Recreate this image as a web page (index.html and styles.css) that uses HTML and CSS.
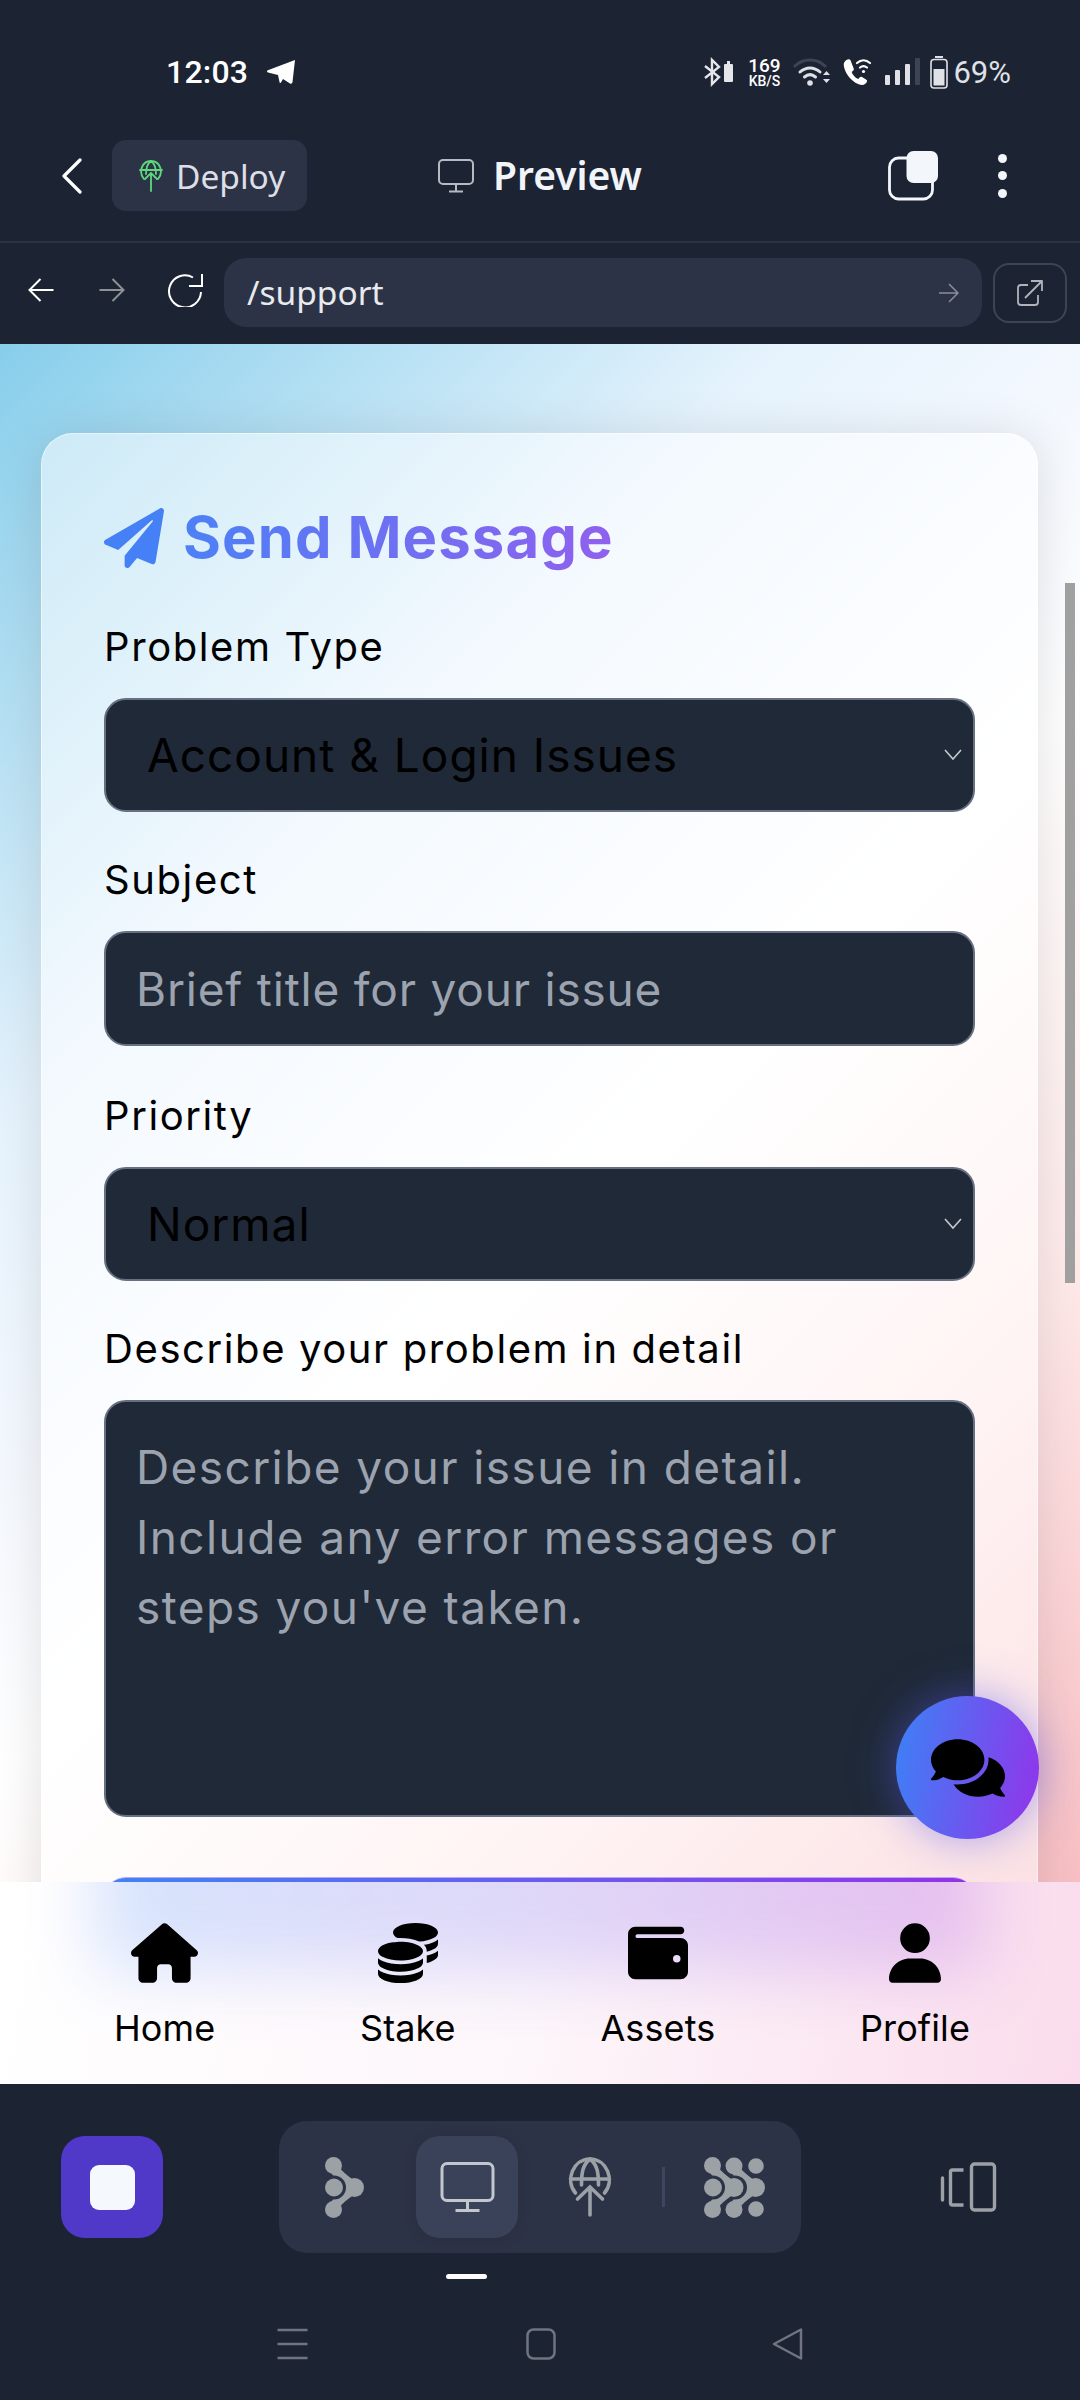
FILE: index.html

```html
<!DOCTYPE html>
<html>
	<head>
		<meta http-equiv="Content-Type" content="text/html; charset=utf-8" />
		<title>Preview - Support</title>
		<link rel="stylesheet" href="styles.css">
	</head>
	<body>
		<div id="phone">
			<!-- status bar -->
			<div class="status">
				<span class="time">12:03</span>
				<svg class="tg" viewBox="0 0 28 24" width="28" height="24"><path fill="#fff" d="M28 0 25.500 22c-.2 1.500-1.300 2-2.500 1.500L16 19l-2 3.500c-.5.800-1.500.5-1.500-.5L11 15 1 12.500C-.3 12-.3 11 .8 10.300Z"/></svg>
				<div class="status-icons">
					<svg viewBox="0 0 30 30" width="30" height="30" fill="none"><path stroke="#e4e6ea" stroke-width="2.400" d="M1 9 15 20 8 27V3l7 7L1 21"/><rect x="20" y="7" width="9" height="18" rx="1" fill="#e4e6ea"/><rect x="23" y="4" width="3" height="3" fill="#e4e6ea"/></svg>
					<div class="speed"><b>169</b><i>KB/S</i></div>
					<svg viewBox="0 0 37 30" width="37" height="30" fill="none" stroke-linecap="round"><path stroke="#3d4454" stroke-width="3" d="M2 9C10 1 24 1 32 9"/><path stroke="#dfe1e6" stroke-width="3" d="M7 15c6-5.500 14-5.500 20 0M11.500 20c3.500-3 7.500-3 11 0"/><circle cx="17" cy="26" r="2.800" fill="#dfe1e6"/><path fill="#dfe1e6" d="M30 18h7l-3.500-4ZM30 22h7l-3.500 4Z"/></svg>
					<svg viewBox="0 0 29 30" width="29" height="30" fill="none"><path fill="#fff" d="M1 6c-1 2 1 9 5 14s10 8 13 8c2.500 0 4.500-2 5-3.500.3-1-.2-1.500-1-2l-4-2.500c-1-.5-1.700-.3-2.400.5l-1.400 1.500c-2.500-.8-5.500-4-6.500-7l1.600-1.500c.6-.6.8-1.300.3-2.200L7.400 3c-.5-.8-1.200-1-2-.8C3.400 2.700 1.700 4 1 6Z"/><path stroke="#fff" stroke-width="2.200" stroke-linecap="round" d="M14 6c4-3.500 9-3.500 13 0M17 10.500c2.200-1.800 4.800-1.800 7 0"/><circle cx="20.500" cy="14.500" r="1.600" fill="#fff"/></svg>
					<svg class="sig" viewBox="0 0 35 28" width="35" height="28"><rect x="0" y="17" width="5" height="10" rx="1" fill="#dfe1e6"/><rect x="10" y="12" width="5" height="15" rx="1" fill="#dfe1e6"/><rect x="20" y="6" width="5" height="21" rx="1" fill="#dfe1e6"/><rect x="30" y="0" width="5" height="27" rx="1" fill="#3d4454"/></svg>
					<svg class="batt" viewBox="0 0 18 33" width="18" height="33" fill="none"><rect x="5" y="0" width="8" height="2" fill="#dfe1e6"/><rect x="1" y="3.500" width="16" height="28.500" rx="3" stroke="#dfe1e6" stroke-width="1.600"/><rect x="3.500" y="13" width="11" height="16.500" fill="#dfe1e6"/></svg>
					<span class="pct">69%</span>
				</div>
			</div>

			<!-- top bar -->
			<div class="appbar">
				<svg class="back" viewBox="0 0 20 36" width="20" height="36" fill="none"><path stroke="#fff" stroke-width="3.200" stroke-linecap="round" stroke-linejoin="round" d="M18 2 2 18l16 16"/></svg>
				<div class="chip">
					<svg viewBox="0 0 24 32" width="24" height="32" fill="none" stroke="#5dd87e" stroke-width="1.800" stroke-linecap="round"><path d="M5 19C-1 12 3 1 12 1s13 11 7 18"/><path d="M1 10h22M12 1C8 4 7 8 7 14M12 1c4 3 5 7 5 13"/><path d="M12 31V13M6 19l6-6 6 6"/></svg>
					<span>Deploy</span>
				</div>
				<svg class="mon" viewBox="0 0 36 34" width="36" height="34" fill="none" stroke="#b6bac2" stroke-width="2"><rect x="1" y="1" width="34" height="24" rx="4"/><path d="M18 25v7M11 32.500h14"/></svg>
				<span class="title">Preview</span>
				<svg class="tabs" viewBox="0 0 50 50" width="50" height="50"><rect x="1.500" y="7" width="43" height="41" rx="9" fill="none" stroke="#f3f6fb" stroke-width="2.800"/><rect x="18.500" y="0" width="31.500" height="32" rx="7" fill="#f3f6fb"/></svg>
				<div class="dots"><i></i><i></i><i></i></div>
			</div>

			<!-- url bar -->
			<div class="urlbar">
				<svg class="nav" viewBox="0 0 26 26" width="27" height="26" fill="none" stroke="#fff" stroke-width="2"><path d="M26 13H2M13 2 2 13l11 11"/></svg>
				<svg class="nav fwd" viewBox="0 0 26 26" width="27" height="26" fill="none" stroke="#8e9196" stroke-width="2"><path d="M0 13h24M13 2l11 11-11 11"/></svg>
				<svg class="nav reload" viewBox="0 0 36 34" width="36" height="34" fill="none" stroke="#fff" stroke-width="2"><path d="M34 19A16 16 0 1 1 26 4.500"/><path d="M22 13h13V1"/></svg>
				<div class="url">
					<span>/support</span>
					<svg viewBox="0 0 20 20" width="20" height="20" fill="none" stroke="#8a8e98" stroke-width="1.500"><path d="M0 10h19M10 1l9 9-9 9"/></svg>
				</div>
				<div class="ext">
					<svg viewBox="0 0 26 26" width="26" height="26" fill="none" stroke="#b0b4ba" stroke-width="1.800" stroke-linejoin="round"><path d="M11 5H4a3 3 0 0 0-3 3v14a3 3 0 0 0 3 3h14a3 3 0 0 0 3-3v-7"/><path d="M8 18 25 1M14 1h11v10"/></svg>
				</div>
			</div>

			<!-- page -->
			<div class="page">
				<div class="card">
					<h2 class="heading">
						<svg viewBox="0 0 512 512" width="60" height="60"><path fill="#4680f6" d="M476 3.200L12.500 270.600c-18.100 10.400-15.800 35.600 2.200 43.200L121 358.400l287.300-253.200c5.500-4.900 13.300 2.600 8.600 8.300L176 407v80.500c0 23.600 28.500 32.900 42.500 15.800L282 426l124.600 52.200c14.200 6 30.400-2.900 33-18.200l72-432C515 7.800 493.300-6.800 476 3.200z"/></svg>
						<span>Send Message</span>
					</h2>
					<label class="label">Problem Type</label>
					<div class="select-wrap">
						<select class="control"><option>Account &amp; Login Issues</option></select>
						<svg viewBox="0 0 18 12" width="18" height="12" fill="none" stroke="#c6cad2" stroke-width="1.600"><path d="M1 1l8 9 8-9"/></svg>
					</div>
					<label class="label">Subject</label>
					<input class="control text" type="text" placeholder="Brief title for your issue">
					<label class="label">Priority</label>
					<div class="select-wrap">
						<select class="control"><option>Normal</option></select>
						<svg viewBox="0 0 18 12" width="18" height="12" fill="none" stroke="#c6cad2" stroke-width="1.600"><path d="M1 1l8 9 8-9"/></svg>
					</div>
					<label class="label">Describe your problem in detail</label>
					<textarea class="control area" placeholder="Describe your issue in detail. Include any error messages or steps you've taken."></textarea>
					<div class="send"></div>
				</div>
				<div class="scroll"></div>
				<div class="fab">
					<svg viewBox="0 0 576 512" width="74" height="66"><path d="M416 192c0-88.400-93.100-160-208-160S0 103.600 0 192c0 34.300 14.100 65.900 38 92-13.400 30.200-35.500 54.200-35.800 54.500-2.200 2.300-2.800 5.700-1.500 8.700S4.800 352 8 352c36.600 0 66.900-12.300 88.700-25 32.200 15.700 70.300 25 111.300 25 114.900 0 208-71.600 208-160zm122 220c23.900-26 38-57.700 38-92 0-66.900-53.500-124.200-129.300-148.100.9 6.600 1.300 13.300 1.300 20.100 0 105.900-107.700 192-240 192-10.800 0-21.300-.8-31.700-1.900C207.800 439.600 281.800 480 368 480c41 0 79.100-9.200 111.300-25 21.800 12.700 52.100 25 88.700 25 3.200 0 6.100-1.900 7.300-4.800 1.300-2.900.7-6.300-1.500-8.700-.3-.3-22.400-24.200-35.800-54.500z"/></svg>
				</div>
			</div>

			<!-- bottom tabs -->
			<div class="tabbar">
				<div class="tab">
					<svg viewBox="0 0 576 512" width="67" height="60"><path d="M575.800 255.500c0 18-15 32.100-32 32.100h-32l.7 160.200c0 2.700-.2 5.400-.5 8.100V472c0 22.100-17.900 40-40 40H456c-1.100 0-2.200 0-3.300-.1c-1.400 .1-2.800 .1-4.200 .1H416 392c-22.100 0-40-17.900-40-40V448 384c0-17.700-14.300-32-32-32H256c-17.700 0-32 14.300-32 32v64 24c0 22.100-17.900 40-40 40H160 128.100c-1.500 0-3-.1-4.500-.2c-1.200 .1-2.400 .2-3.600 .2H104c-22.100 0-40-17.900-40-40V360c0-.9 0-1.900 .1-2.800V287.600H32c-18 0-32-14-32-32.100c0-9 3-17 10-24L266.400 8c7-7 15-8 22-8s15 2 21 7L564.800 231.500c8 7 12 15 11 24z"/></svg>
					<span>Home</span>
				</div>
				<div class="tab">
					<svg viewBox="0 0 512 512" width="60" height="60"><path d="M512 80c0 18-14.300 34.600-38.400 48c-29.100 16.100-72.500 27.500-122.300 30.900c-3.700-1.800-7.400-3.500-11.300-5C300.600 137.400 248.200 128 192 128c-8.300 0-16.400 .2-24.500 .6l-1.100-.6C142.300 114.600 128 98 128 80c0-44.200 86-80 192-80S512 35.800 512 80zM160.700 161.100c10.200-.7 20.700-1.100 31.300-1.100c62.200 0 117.400 12.300 152.500 31.400C369.300 204.900 384 221.700 384 240c0 4-.7 7.900-2.100 11.700c-4.600 13.200-17 25.300-35 35.500c0 0 0 0 0 0c-.1 .1-.3 .1-.4 .2l0 0 0 0c-.3 .2-.6 .3-.9 .5c-35 19.400-90.800 32-153.600 32c-59.600 0-112.900-11.300-148.200-29.100c-1.900-.9-3.700-1.900-5.500-2.900C14.300 274.600 0 258 0 240c0-34.800 53.400-64.500 128-75.400c10.500-1.500 21.400-2.700 32.700-3.500zM416 240c0-21.900-10.600-39.900-24.100-53.400c28.300-4.400 54.200-11.400 76.200-20.500c16.300-6.800 31.500-15.200 43.900-25.500V176c0 19.300-16.500 37.100-43.800 50.900c-14.600 7.400-32.400 13.700-52.400 18.500c.1-1.800 .2-3.500 .2-5.300zm-32 96c0 18-14.300 34.600-38.400 48c-1.800 1-3.600 1.900-5.500 2.900C304.900 404.700 251.600 416 192 416c-62.800 0-118.600-12.600-153.600-32C14.300 370.600 0 354 0 336V300.600c12.500 10.300 27.600 18.700 43.900 25.500C83.400 342.600 135.800 352 192 352s108.600-9.400 148.100-25.900c7.800-3.200 15.300-6.900 22.400-10.900c6.100-3.400 11.800-7.200 17.200-11.200c1.500-1.100 2.900-2.300 4.300-3.400V304v5.700V336zm32 0V304 278.100c19-4.200 36.500-9.500 52.100-16c16.300-6.800 31.500-15.200 43.900-25.500V272c0 10.500-5 21-14.900 30.900c-16.300 16.300-45 29.700-81.300 38.400c.1-1.700 .2-3.500 .2-5.300zM192 448c56.200 0 108.600-9.400 148.100-25.900c16.300-6.800 31.500-15.200 43.900-25.500V432c0 44.200-86 80-192 80S0 476.200 0 432V396.600c12.500 10.300 27.600 18.700 43.900 25.500C83.400 438.600 135.800 448 192 448z"/></svg>
					<span>Stake</span>
				</div>
				<div class="tab">
					<svg viewBox="0 0 512 512" width="60" height="60"><path d="M64 32C28.700 32 0 60.700 0 96V416c0 35.300 28.700 64 64 64H448c35.300 0 64-28.700 64-64V192c0-35.300-28.700-64-64-64H80c-8.800 0-16-7.200-16-16s7.200-16 16-16H448c17.700 0 32-14.300 32-32s-14.300-32-32-32H64zM416 272a32 32 0 1 1 0 64 32 32 0 1 1 0-64z"/></svg>
					<span>Assets</span>
				</div>
				<div class="tab">
					<svg viewBox="0 0 448 512" width="52" height="60"><path d="M224 256A128 128 0 1 0 224 0a128 128 0 1 0 0 256zm-45.700 48C79.800 304 0 383.800 0 482.300C0 498.700 13.300 512 29.700 512H418.300c16.400 0 29.700-13.300 29.700-29.700C448 383.800 368.200 304 269.700 304H178.300z"/></svg>
					<span>Profile</span>
				</div>
			</div>

			<!-- dock and system nav -->
			<div class="dock">
				<div class="dock-row">
					<div class="stop"><i></i></div>
					<div class="pill">
						<svg viewBox="0 0 39 61" width="39" height="61" fill="#9ca1a6"><circle cx="8.500" cy="8.500" r="8.500"/><circle cx="8.500" cy="52.500" r="8.500"/><circle cx="29.500" cy="30.500" r="9.500"/><path fill="none" stroke="#9ca1a6" stroke-width="10" d="M8.500 9c2 9 12 13 21 21.500C20.500 39 10.500 43 8.500 52"/><circle cx="9" cy="30.500" r="12" fill="#2d3346"/><circle cx="9" cy="30.500" r="9"/></svg>
						<div class="active">
							<svg viewBox="0 0 54 50" width="55" height="50" fill="none" stroke="#c3c6cd" stroke-width="3"><rect x="1.500" y="1.500" width="51" height="37" rx="5"/><path d="M27 39v9M15 48.500h24"/></svg>
						</div>
						<svg class="i-globe" viewBox="0 0 43 60" width="44" height="60" fill="none" stroke="#9ca1a6" stroke-width="3.600" stroke-linecap="round"><path d="M7 36C-4 23 5 2 21.500 2S47 23 36 36"/><path d="M2 22h39M21.500 2C14 8 13 16 13 28M21.500 2C29 8 30 16 30 28"/><path d="M21.500 58V30M9 42l12.500-12L34 42"/></svg>
						<i class="sep"></i>
						<svg class="i-grid" viewBox="0 0 61 61" width="61" height="61" fill="#9ca1a6">
							<g fill="none" stroke="#9ca1a6" stroke-width="10"><path d="M30 9c2 9 12 13 21 21.500C42 39 32 43 30 52"/></g>
							<circle cx="30" cy="9" r="8.500"/><circle cx="30" cy="52.500" r="8.500"/><circle cx="51.500" cy="30.500" r="9.500"/>
							<circle cx="31" cy="30.500" r="12" fill="#2d3346"/>
							<path fill="none" stroke="#9ca1a6" stroke-width="10" d="M8.500 9c2 9 12 13 21 21.500C20.500 39 10.500 43 8.500 52"/>
							<circle cx="8.500" cy="8.500" r="8.500"/><circle cx="8.500" cy="52.500" r="8.500"/><circle cx="30" cy="30.500" r="9.500"/>
							<circle cx="9" cy="30.500" r="12" fill="#2d3346"/><circle cx="9" cy="30.500" r="9"/>
							<circle cx="52" cy="9" r="9" stroke="#2d3346" stroke-width="2.400"/><circle cx="52" cy="52" r="9" stroke="#2d3346" stroke-width="2.400"/>
						</svg>
					</div>
					<svg class="i-split" viewBox="0 0 56 50" width="57" height="50" fill="none" stroke="#9ca1a6"><path stroke-width="3.400" stroke-linecap="round" d="M2 16v22"/><path stroke-width="3.400" stroke-linejoin="round" d="M23 8H12a2 2 0 0 0-2 2v31a2 2 0 0 0 2 2h11"/><rect x="31" y="2" width="23" height="46" rx="3" stroke-width="3.400"/></svg>
				</div>
				<div class="marker"></div>
				<div class="sysnav">
					<svg viewBox="0 0 30 32" width="31" height="32" stroke="#6f7480" stroke-width="2.500"><path d="M0 2h30M0 16h30M0 30h30"/></svg>
					<svg class="s-home" viewBox="0 0 30 32" width="30" height="32" fill="none" stroke="#6f7480" stroke-width="2.500"><rect x="1.500" y="1.500" width="27" height="29" rx="6"/></svg>
					<svg class="s-back" viewBox="0 0 31 32" width="31" height="32" fill="none" stroke="#6f7480" stroke-width="2.500" stroke-linejoin="round"><path d="M2 16 29 1.500v29Z"/></svg>
				</div>
			</div>
		</div>
	</body>
</html>
```

FILE: styles.css

```css
* {box-sizing:border-box}
body {margin:0;background:#1c2333;font-family:"Inter","Noto Sans",sans-serif}
#phone {width:1080px;height:2400px;display:flex;flex-direction:column;overflow:hidden;background:#1c2333}

.status {height:120px;display:flex;align-items:center;padding:24px 69px 0 166px;flex:none}
.time {font:500 32px Roboto,sans-serif;color:#fff;letter-spacing:.2px}
.tg {margin-left:19px}
.status-icons {margin-left:auto;display:flex;align-items:center}
.status-icons svg {display:block;margin-right:13px}
.speed {width:34px;margin-right:12px;color:#fff;font-family:Roboto,sans-serif;text-align:center;line-height:1}
.speed b {display:block;font-weight:500;font-size:19px;line-height:17px}
.speed i {display:block;font-style:normal;font-size:14px;line-height:14px;font-weight:500}
.status-icons .sig {margin-right:10px}
.status-icons .batt {margin-right:5px}
.pct {font:400 31px Roboto,sans-serif;color:#dfe1e6}

.appbar {height:123px;flex:none;display:flex;align-items:center;border-bottom:2px solid #2a3145;padding-bottom:10px}
.back {margin-left:62px}
.chip {margin-left:30px;width:195px;height:71px;border-radius:14px;background:#2d3346;display:flex;align-items:center;padding-left:27px;color:#dcdfe6;font:400 33.500px "Noto Sans",sans-serif}
.chip svg {margin-right:13px;flex:none}
.mon {margin-left:131px}
.title {margin:-3px 0 0 19px;color:#f1f4f9;font:600 39px "Noto Sans",sans-serif}
.tabs {margin-left:auto}
.dots {margin:0 73px 0 60px;display:flex;flex-direction:column;gap:8.500px}
.dots i {display:block;width:9px;height:9px;border-radius:50%;background:#f3f6fb}

.urlbar {height:101px;flex:none;display:flex;align-items:center;padding:0 0 2px 27px}
.nav {margin-top:-6px}
.fwd {margin-left:45px}
.reload {margin-left:41px}
.url {margin-left:21px;width:758px;height:69px;border-radius:22px;background:#2d3346;display:flex;align-items:center;justify-content:space-between;padding:0 23px;color:#e8eaee;font:400 33.500px "Noto Sans",sans-serif}
.url span {margin-top:-2px}
.ext {margin-left:11px;width:74px;height:60px;border:2px solid #3c4456;border-radius:16px;display:flex;align-items:center;justify-content:center}

.page {flex:1;min-height:0;position:relative;overflow:hidden;background:linear-gradient(135deg,#87ceeb 0%,#e6f3fd 30%,#f6f9fe 45%,#fff 55%,#ffeaea 76%,#f8bfc4 100%);padding:89px 42px 0 41px}
.card {height:1600px;border-radius:32px;padding:62px 62px 0;background:rgba(255,255,255,.52);border:1px solid rgba(255,255,255,.5);box-shadow:0 4px 50px rgba(0,0,0,.12)}
.heading {margin:0 0 38px;height:84px;display:flex;align-items:center;font-size:58px;font-weight:700;letter-spacing:1.100px}
.heading svg {margin-right:19px;flex:none}
.heading span {background:linear-gradient(90deg,#4d80f6,#9060ee);-webkit-background-clip:text;background-clip:text;color:transparent;white-space:nowrap;display:block;margin-top:-2px}
.label {display:block;height:58px;line-height:58px;margin-bottom:22px;font-size:40px;color:#000;letter-spacing:1.600px;white-space:nowrap}
.control {display:block;width:100%;height:114px;border:2px solid #667080;border-radius:22px;background:#1f2937;font-family:inherit;font-size:46px;letter-spacing:1px;color:#000;margin:0 0 39px;outline:none}
select.control {appearance:none;-webkit-appearance:none;padding:0 0 0 41px}
.text {height:115px;padding:0 30px;margin-bottom:41px;letter-spacing:.8px}
.area {height:417px;padding:30px 30px;line-height:70px;resize:none;overflow:hidden;margin-bottom:60px;letter-spacing:1.400px}
.control::placeholder {color:#9ca3af;opacity:1}
.select-wrap {position:relative}
.select-wrap svg {position:absolute;right:13px;top:51px}
.send {height:115px;border-top:1px solid #b9a8f6;border-radius:22px;background:linear-gradient(90deg,#3f83f6,#9333ea)}
.scroll {position:absolute;right:5px;top:239px;width:10px;height:700px;background:#a0a0a0}
.fab {position:absolute;left:896px;top:1352px;width:143px;height:143px;border-radius:50%;background:linear-gradient(100deg,#3b82f6,#9333ea);box-shadow:0 0 44px rgba(90,90,240,.5);display:flex;align-items:center;justify-content:center}

.tabbar {height:202px;flex:none;position:relative;overflow:hidden;display:flex;justify-content:space-between;padding:41px 110px 0 114px;background:linear-gradient(100deg,#fff 0%,#fdf6fa 50%,#fadcec 100%)}
.tabbar:before {content:"";position:absolute;left:95px;right:95px;top:-80px;height:170px;background:linear-gradient(90deg,#3b82f6,#9333ea);filter:blur(34px);opacity:.2}
.tab {position:relative;display:flex;flex-direction:column;align-items:center;color:#000;font-size:36px;letter-spacing:.1px;white-space:nowrap}
.tab span {margin-top:15px;line-height:60px}

.dock {height:316px;flex:none;display:flex;flex-direction:column}
.dock-row {margin-top:37px;height:132px;display:flex;align-items:center;padding-left:61px;flex:none}
.stop {width:102px;height:102px;border-radius:24px;background:#5038c8;display:flex;align-items:center;justify-content:center}
.stop i {display:block;width:45px;height:45px;border-radius:9px;background:#f5f8fd}
.pill {margin-left:116px;width:522px;height:132px;border-radius:28px;background:#2d3346;display:flex;align-items:center;padding-left:46px}
.active {margin-left:52px;width:102px;height:102px;border-radius:24px;background:#3a4259;box-shadow:0 2px 14px rgba(0,0,0,.1);display:flex;align-items:center;justify-content:center}
.i-globe {margin-left:50px}
.sep {display:block;margin-left:50px;width:3px;height:40px;background:#3d465e}
.i-grid {margin-left:39px}
.i-split {margin-left:139px}
.marker {margin:21px 0 0 446px;width:41px;height:5px;border-radius:3px;background:#fff;flex:none}
.sysnav {margin-top:49px;padding-left:277px;display:flex}
.s-home {margin-left:218px}
.s-back {margin-left:216px}
```
